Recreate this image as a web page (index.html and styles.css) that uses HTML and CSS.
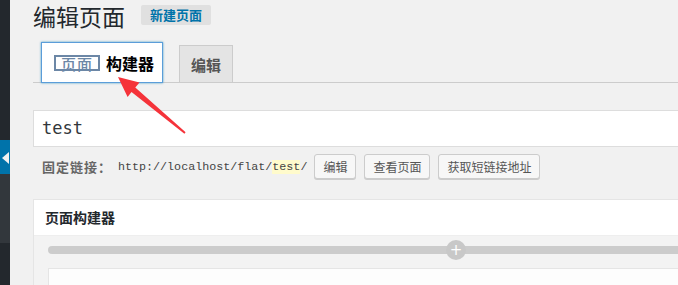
FILE: index.html
```html
<!DOCTYPE html>
<html lang="zh-CN">
<head>
    <meta charset="UTF-8">
    <title>编辑页面</title>
    <link rel="stylesheet" href="styles.css">
</head>
<body>
    <div class="sidebar">
        <div class="side-top"></div>
        <div class="side-current"><span class="side-arrow"></span></div>
        <div class="side-sub"></div>
        <div class="side-rest"></div>
    </div>

    <div class="wrap">
        <div class="title-row">
            <h1>编辑页面</h1>
            <a class="add-new">新建页面</a>
        </div>

        <div class="tabs">
            <div class="tab tab-active"><span class="tab-badge">页面</span>构建器</div>
            <div class="tab tab-plain">编辑</div>
        </div>

        <div class="title-input">test</div>

        <div class="permalink">
            <strong>固定链接：</strong>
            <span class="url">http://localhost/flat/<span class="slug">test</span>/</span>
            <button class="btn">编辑</button>
            <button class="btn">查看页面</button>
            <button class="btn">获取短链接地址</button>
        </div>

        <div class="postbox">
            <h2 class="postbox-title">页面构建器</h2>
            <div class="postbox-inside">
                <div class="row-bar"><span class="row-add">+</span></div>
                <div class="row-panel"></div>
            </div>
        </div>
    </div>

    <svg class="pointer" width="678" height="285" viewBox="0 0 678 285">
        <polygon points="118,77 139.5,82.5 135.3,87.5 185.6,132.2 184.4,133.8 131.5,92.1 127.6,97" fill="#f5333a"/>
    </svg>
</body>
</html>
```

FILE: styles.css
```css
html, body { margin: 0; height: 100%; overflow: hidden; }
body { display: flex; background: #f1f1f1; color: #23282d; font-family: "Noto Sans CJK SC", "Noto Sans", sans-serif; position: relative; }

.sidebar { width: 10px; flex: none; display: flex; flex-direction: column; }
.side-top { height: 140px; background: #23282d; }
.side-current { height: 34px; background: #0073aa; position: relative; }
.side-arrow { position: absolute; left: 2px; top: 12px; border: 6px solid transparent; border-right: 7px solid #f1f1f1; border-left: 0; }
.side-sub { height: 69px; background: #32373c; }
.side-rest { flex: 1; background: #23282d; }

.wrap { flex: 1; min-width: 0; padding-left: 23px; overflow: hidden; }

.title-row { display: flex; align-items: center; height: 29px; padding-top: 2px; }
h1 { margin: 0; font-size: 23px; font-weight: 400; line-height: 29px; color: #23282d; }
.add-new { margin-left: 16px; margin-top: -3px; background: #e0e0e0; color: #0073aa; font-size: 13px; font-weight: 700; line-height: 20px; padding: 0 9px; border-radius: 2px; }

.tabs { display: flex; align-items: flex-end; margin-top: 11px; padding-left: 8px; border-bottom: 1px solid #ccc; height: 40px; }
.tab { box-sizing: border-box; display: flex; align-items: center; font-size: 15px; font-weight: 700; }
.tab-active { height: 41px; width: 122px; margin-bottom: -1px; padding-left: 12px; background: #fff; border: 1px solid #5b9dd9; box-shadow: 0 0 2px rgba(30, 140, 190, .8); color: #000; font-size: 16px; }
.tab-badge { box-sizing: border-box; height: 16px; width: 46px; margin-right: 6px; border: 2px solid #6c87a6; color: #6c87a6; font-size: 15px; line-height: 13px; text-align: center; font-weight: 500; letter-spacing: 1px; }
.tab-plain { height: 37px; width: 54px; margin-left: 16px; justify-content: center; background: #e4e4e4; border: 1px solid #ccc; border-bottom: 0; color: #555; }

.title-input { box-sizing: border-box; margin-top: 27px; margin-right: -4px; height: 37px; background: #fff; border: 1px solid #ddd; padding-left: 8px; font-family: "DejaVu Sans Mono", monospace; font-size: 17px; line-height: 35px; color: #32373c; }

.permalink { display: flex; align-items: center; height: 25px; margin-top: 7px; padding-left: 9px; font-size: 13px; color: #666; }
.permalink strong { color: #666; letter-spacing: 1px; }
.url { margin-left: 6px; font-family: "Liberation Mono", monospace; font-size: 11.7px; color: #444; }
.slug { background: #fffbcc; }
.btn { height: 25px; margin-left: 8px; padding: 0 8px; background: #f7f7f7; border: 1px solid #ccc; border-radius: 3px; box-shadow: 0 1px 0 #ccc; font-family: "Noto Sans CJK SC", sans-serif; font-size: 12px; color: #555; line-height: 22px; }
.url + .btn { margin-left: 7px; }

.postbox { box-sizing: border-box; margin-top: 20px; margin-right: -4px; border: 1px solid #e5e5e5; background: #fff; }
.postbox-title { margin: 0; height: 35px; padding-left: 11px; border-bottom: 1px solid #eee; font-size: 14px; font-weight: 700; line-height: 35px; color: #23282d; }
.postbox-inside { background: #f3f3f3; padding: 10px 0 0 14px; height: 60px; }
.row-bar { position: relative; height: 8px; border-radius: 4px 0 0 4px; background: #ccc; }
.row-add { position: absolute; left: 398px; top: -6px; width: 20px; height: 20px; border-radius: 50%; background: #c8c8c8; color: #fff; font-family: "DejaVu Sans", sans-serif; font-size: 15px; line-height: 20px; text-align: center; }
.row-panel { margin-top: 14px; height: 40px; background: #fdfdfd; border: 1px solid #e5e5e5; }

.pointer { position: absolute; left: 0; top: 0; pointer-events: none; }
```
